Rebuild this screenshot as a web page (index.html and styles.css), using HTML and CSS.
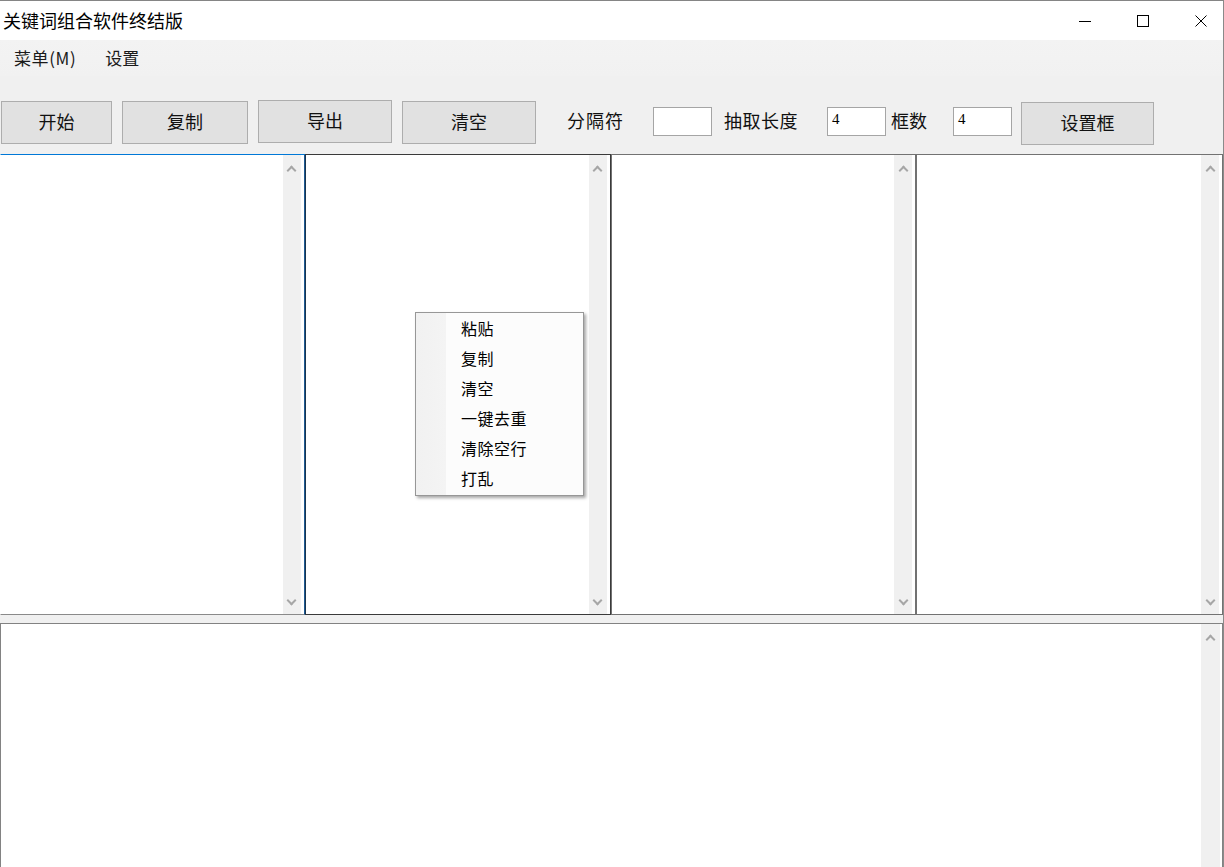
FILE: index.html
```html
<!DOCTYPE html>
<html lang="zh-CN">
<head>
<meta charset="utf-8">
<title>关键词组合软件终结版</title>
<link rel="stylesheet" href="styles.css">
</head>
<body>
<div class="window">
  <div class="titlebar">
    <div class="title">关键词组合软件终结版</div>
    <div class="controls">
      <div class="ctrl"><svg width="12" height="12" viewBox="0 0 12 12"><path d="M0 6.5H12" stroke="#000" stroke-width="1"/></svg></div>
      <div class="ctrl"><svg width="12" height="12" viewBox="0 0 12 12"><rect x="0.5" y="0.5" width="11" height="11" fill="none" stroke="#000" stroke-width="1"/></svg></div>
      <div class="ctrl"><svg width="12" height="12" viewBox="0 0 12 12"><path d="M0.5 0.5L11.5 11.5M11.5 0.5L0.5 11.5" stroke="#000" stroke-width="1"/></svg></div>
    </div>
  </div>
  <div class="menubar">
    <span class="menu-item">菜单(M)</span>
    <span class="menu-item">设置</span>
  </div>
  <div class="toolbar">
    <button class="btn btn-start">开始</button>
    <button class="btn btn-copy">复制</button>
    <button class="btn btn-export">导出</button>
    <button class="btn btn-clear">清空</button>
    <span class="label label-sep">分隔符</span>
    <div class="field field-sep"></div>
    <span class="label label-len">抽取长度</span>
    <div class="field field-len">4</div>
    <span class="label label-count">框数</span>
    <div class="field field-count">4</div>
    <button class="btn btn-set">设置框</button>
  </div>
  <div class="panes">
    <div class="pane pane-focus">
      <div class="pane-body"></div>
      <div class="scrollbar"><span class="arrow up"></span><span class="arrow down"></span></div>
    </div>
    <div class="pane pane-hover">
      <div class="pane-body"></div>
      <div class="scrollbar"><span class="arrow up"></span><span class="arrow down"></span></div>
    </div>
    <div class="pane">
      <div class="pane-body"></div>
      <div class="scrollbar"><span class="arrow up"></span><span class="arrow down"></span></div>
    </div>
    <div class="pane">
      <div class="pane-body"></div>
      <div class="scrollbar"><span class="arrow up"></span><span class="arrow down"></span></div>
    </div>
  </div>
  <div class="output">
    <div class="pane-body"></div>
    <div class="scrollbar scrollbar-out"><span class="arrow up"></span></div>
  </div>

  <div class="context-menu">
    <div class="cm-item">粘贴</div>
    <div class="cm-item">复制</div>
    <div class="cm-item">清空</div>
    <div class="cm-item">一键去重</div>
    <div class="cm-item">清除空行</div>
    <div class="cm-item">打乱</div>
  </div>
</div>
</body>
</html>
```
FILE: styles.css
```css
* { box-sizing: border-box; }
html, body {
  margin: 0;
  padding: 0;
  width: 1224px;
  height: 867px;
  overflow: hidden;
  background: #f0f0f0;
  font-family: "Noto Sans CJK SC", "Noto Sans", sans-serif;
  color: #000;
}
.window {
  position: relative;
  width: 1224px;
  height: 867px;
  border-top: 1px solid #858585;
  border-right: 1px solid #8a8a8a;
  overflow: hidden;
}
.titlebar {
  height: 39px;
  background: #fff;
  display: flex;
  align-items: center;
  justify-content: space-between;
}
.title {
  font-size: 18px;
  padding-left: 3px;
  line-height: 39px;
  margin-top: -1px;
}
.controls {
  display: flex;
  gap: 12px;
  margin-right: -1px;
}
.ctrl {
  width: 46px;
  height: 39px;
  display: flex;
  align-items: center;
  justify-content: center;
}
.ctrl svg { display: block; margin-top: 1px; }
.menubar {
  height: 36px;
  background: linear-gradient(to bottom, #f3f3f3, #f1f1f1);
  display: flex;
  align-items: center;
  padding-left: 14px;
  font-size: 17px;
  color: #1a1a1a;
}
.menu-item { line-height: 36px; }
.menu-item:first-child { letter-spacing: 0.6px; }
.menu-item + .menu-item { margin-left: 29px; }

.toolbar {
  height: 78px;
  display: flex;
  align-items: flex-start;
  padding-left: 1px;
}
.btn {
  font-family: inherit;
  font-size: 18px;
  color: #111;
  background: #e1e1e1;
  border: 1px solid #adadad;
  height: 43px;
  margin-top: 25px;
  padding: 0 0 3px;
  line-height: 36px;
}
.btn-start { width: 111px; }
.btn-copy { width: 126px; margin-left: 10px; }
.btn-export { width: 134px; margin-left: 10px; margin-top: 24px; }
.btn-clear { width: 134px; margin-left: 10px; }
.btn-set { width: 133px; margin-left: 9px; margin-top: 26px; }
.label {
  font-size: 18px;
  color: #111;
  height: 29px;
  line-height: 28px;
  margin-top: 30px;
}
.label-sep { margin-left: 31px; letter-spacing: 1px; }
.label-len { margin-left: 12px; letter-spacing: 0.5px; }
.label-count { margin-left: 5px; }
.field {
  width: 59px;
  height: 29px;
  margin-top: 31px;
  background: #fff;
  border: 1px solid #a5a5a5;
  font-family: "Liberation Serif", "DejaVu Serif", serif;
  font-size: 15px;
  line-height: 18px;
  padding-left: 4px;
  padding-top: 2px;
}
.field-sep { margin-left: 29px; }
.field-len { margin-left: 29px; }
.field-count { margin-left: 26px; }

.panes {
  display: flex;
  height: 461px;
}
.pane {
  width: 306px;
  height: 461px;
  border: 1px solid #727272;
  background: #fff;
  display: flex;
}
.pane-focus {
  width: 305px;
  border-color: #0078d7;
  border-left-color: #fff;
  border-bottom-color: #8a8a8a;
  border-right-color: #1d5a93;
}
.pane-hover {
  width: 306px;
  border-color: #3a3a3a;
  border-left-color: #1a3550;
}
.pane:last-child { width: 307px; }
.pane-body { flex: 1; background: #fff; }
.scrollbar {
  width: 18px;
  background: #f0f0f0;
  margin-right: 3px;
  display: flex;
  flex-direction: column;
  justify-content: space-between;
  align-items: center;
  padding: 9px 0 7px;
}
.arrow {
  width: 7px;
  height: 7px;
  border-left: 2px solid #a6a6a6;
  border-top: 2px solid #a6a6a6;
  display: block;
}
.arrow.up { transform: rotate(45deg); margin-top: 3px; }
.arrow.down { transform: rotate(225deg); margin-bottom: 3px; }

.output {
  margin-top: 8px;
  height: 260px;
  border: 1px solid #828282;
  background: #fff;
  display: flex;
}
.scrollbar-out {
  width: 19px;
  margin-right: 2px;
  justify-content: flex-start;
}

.context-menu {
  position: absolute;
  left: 415px;
  top: 311px;
  width: 169px;
  height: 184px;
  border: 1px solid #979797;
  background: linear-gradient(to right, #f1f1f1 0, #f4f4f4 30px, #fcfcfc 30px);
  box-shadow: 2px 2px 3px rgba(0, 0, 0, 0.35);
  padding-top: 0;
}
.cm-item {
  height: 30px;
  line-height: 30px;
  padding-left: 45px;
  font-size: 16px;
  color: #000;
  letter-spacing: 0.5px;
}
```
